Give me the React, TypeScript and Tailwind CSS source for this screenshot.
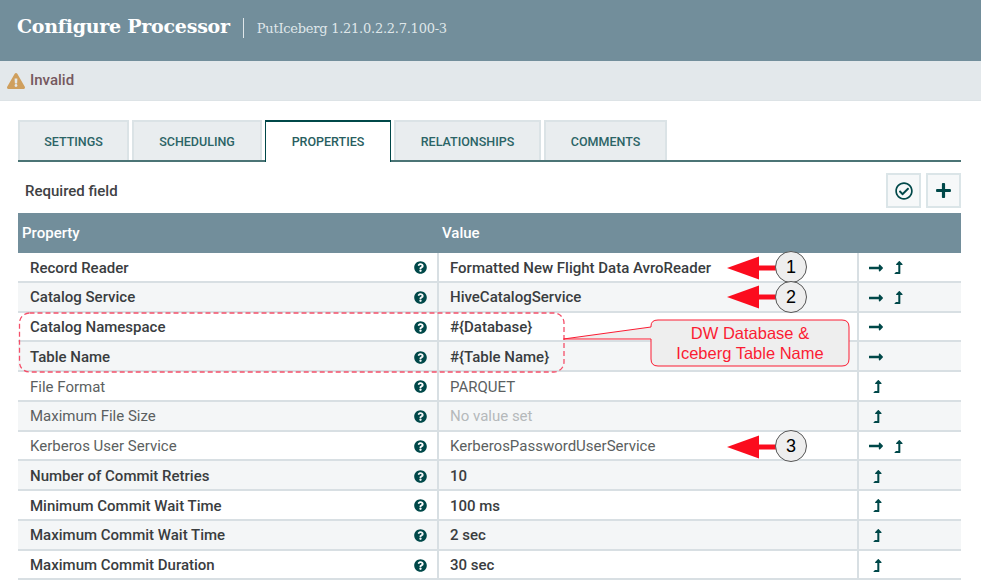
import { FaQuestionCircle, FaLongArrowAltRight, FaLevelUpAlt, FaRegCheckCircle, FaPlus, FaExclamationTriangle } from "react-icons/fa";

type Row = { name: string; value: string; bold: boolean; muted?: boolean; arrow?: boolean; up?: boolean };

const rows: Row[] = [
  { name: "Record Reader", value: "Formatted New Flight Data AvroReader", bold: true, arrow: true, up: true },
  { name: "Catalog Service", value: "HiveCatalogService", bold: true, arrow: true, up: true },
  { name: "Catalog Namespace", value: "#{Database}", bold: true, arrow: true },
  { name: "Table Name", value: "#{Table Name}", bold: true, arrow: true },
  { name: "File Format", value: "PARQUET", bold: false, up: true },
  { name: "Maximum File Size", value: "No value set", bold: false, muted: true, up: true },
  { name: "Kerberos User Service", value: "KerberosPasswordUserService", bold: false, arrow: true, up: true },
  { name: "Number of Commit Retries", value: "10", bold: true, up: true },
  { name: "Minimum Commit Wait Time", value: "100 ms", bold: true, up: true },
  { name: "Maximum Commit Wait Time", value: "2 sec", bold: true, up: true },
  { name: "Maximum Commit Duration", value: "30 sec", bold: true, up: true },
];

const tabs = [
  { label: "SETTINGS", w: "w-[111px]" },
  { label: "SCHEDULING", w: "w-[130px]" },
  { label: "PROPERTIES", w: "w-[126px]", active: true },
  { label: "RELATIONSHIPS", w: "w-[147px]" },
  { label: "COMMENTS", w: "w-[123px]" },
];

export default function App() {
  return (
    <div className="relative h-[581px] w-[981px] overflow-hidden bg-white font-['Roboto',sans-serif]">
      <header className="flex h-[61px] items-center bg-[#728e9b] pl-[17px] pb-[6px]">
        <h1 className="pb-[2px] font-['DejaVu_Serif',serif] text-[19px] font-bold tracking-[-0.25px] text-white">Configure Processor</h1>
        <span className="ml-[13px] h-[20px] w-px bg-[#dfe6e9]" />
        <span className="ml-[13px] pt-[3px] font-['DejaVu_Serif',serif] text-[13px] tracking-[-0.25px] text-[#dfe6e9]">PutIceberg 1.21.0.2.2.7.100-3</span>
      </header>

      <div className="flex h-[40px] items-center gap-[5px] border-b border-[#dde3e6] bg-[#e3e8eb] pl-[7px]">
        <FaExclamationTriangle className="text-[18px] text-[#cf9f5d]" />
        <span className="text-[15px] font-medium text-[#75585e]">Invalid</span>
      </div>

      <nav className="ml-[18px] mr-[20px] mt-[19px] flex h-[42px] gap-[3px] border-b-2 border-[#4b7475]">
        {tabs.map((t) =>
          t.active ? (
            <div key={t.label} className={`${t.w} relative z-10 flex h-[42px] items-center justify-center border-x border-t-2 border-[#004849] bg-white text-[12.5px] font-medium text-[#285e60]`}>
              {t.label}
            </div>
          ) : (
            <div key={t.label} className={`${t.w} flex h-[40px] items-center justify-center border-x-2 border-t-2 border-[#dbe3e6] bg-[#e9edef] pt-[2px] text-[12.5px] font-medium text-[#2b6466]`}>
              {t.label}
            </div>
          )
        )}
      </nav>

      <div className="ml-[18px] mr-[20px] mt-[10px] flex h-[41px] items-center justify-between">
        <span className="pb-[2px] pl-[7px] text-[15px] font-medium text-[#3f4244]">Required field</span>
        <div className="flex gap-[5px] pb-[4px]">
          <button className="flex h-[35px] w-[35px] items-center justify-center border-2 border-[#dbe5e8] bg-[#f6f8f9] text-[18px] text-[#004849]">
            <FaRegCheckCircle />
          </button>
          <button className="flex h-[35px] w-[35px] items-center justify-center border-2 border-[#dbe5e8] bg-[#f6f8f9] text-[17px] text-[#004849]">
            <FaPlus />
          </button>
        </div>
      </div>

      <section className="ml-[18px] mr-[20px]">
        <div className="flex h-[40px] items-center bg-[#728e9b] text-[15px] font-medium text-white">
          <span className="w-[424px] pl-[4px]">Property</span>
          <span>Value</span>
        </div>
        {rows.map((r, i) => (
          <div key={r.name} className={`flex h-[29.75px] border-b-2 border-[#d8dfe3] text-[15px] ${i % 2 ? "bg-[#f4f6f7]" : "bg-white"}`}>
            <div className="flex w-[419px] items-center justify-between pl-[12px] pr-[10px] pt-[2px]">
              <span className={r.bold ? "font-medium text-[#3a3d3f]" : "text-[#5b5f61]"}>{r.name}</span>
              <FaQuestionCircle className="text-[13px] text-[#004849]" />
            </div>
            <div className="flex w-[420px] items-center border-l-2 border-[#d8dfe3] pl-[11px] pt-[2px]">
              <span className={r.muted ? "text-[#b5b9bb]" : r.bold ? "font-medium text-[#3a3d3f]" : "text-[#5b5f61]"}>{r.value}</span>
            </div>
            <div className="flex flex-1 items-center gap-[8px] border-l-2 border-[#d8dfe3] pl-[9px] pt-[2px] text-[#004849]">
              {r.arrow && <FaLongArrowAltRight className="text-[16px]" />}
              {r.up && <FaLevelUpAlt className={`text-[13px] ${r.arrow ? "" : "ml-[3px]"}`} />}
            </div>
          </div>
        ))}
      </section>

      {/* Annotations drawn over the screenshot */}
      <svg className="absolute left-0 top-0" width="981" height="581" viewBox="0 0 981 581" fill="none">
        <rect x="19.5" y="313" width="544.5" height="59" rx="10" stroke="#f4506a" strokeWidth="1.3" strokeDasharray="5 3" />
        <path d="M563.5 339 L651 327 L651 326 Q651 320 658 320 L842 320 Q849 320 849 327 L849 359 Q849 366 842 366 L658 366 Q651 366 651 359 L651 339 Z" fill="#eeeeee" stroke="#fb1c33" strokeWidth="1" />
        <path d="M651 328.5 L651 338" stroke="#eeeeee" strokeWidth="1.5" />
        {[
          [268, 267],
          [297, 297],
          [447, 446],
        ].map(([tip, c]) => (
          <g key={tip}>
            <rect x="755" y={tip - 2.5} width="22" height="5" fill="#fb0c1e" />
            <path d={`M727 ${tip} L759 ${tip - 11.5} L759 ${tip + 11.5} Z`} fill="#fb0c1e" />
            <circle cx="791" cy={c} r="15.5" fill="#eeeeee" stroke="#555555" strokeWidth="1" />
          </g>
        ))}
      </svg>

      <div className="absolute left-[651px] top-[323px] w-[198px] text-center font-['Liberation_Sans',sans-serif] text-[16.5px] leading-[20px] text-[#fb1c33]">
        DW Database &amp;
        <br />
        Iceberg Table Name
      </div>

      {[
        { n: "1", top: "top-[256px]" },
        { n: "2", top: "top-[286px]" },
        { n: "3", top: "top-[435px]" },
      ].map((b) => (
        <div key={b.n} className={`absolute left-[775px] ${b.top} flex h-[22px] w-[32px] items-center justify-center font-['Liberation_Sans',sans-serif] text-[18px] text-black`}>
          {b.n}
        </div>
      ))}
    </div>
  );
}
